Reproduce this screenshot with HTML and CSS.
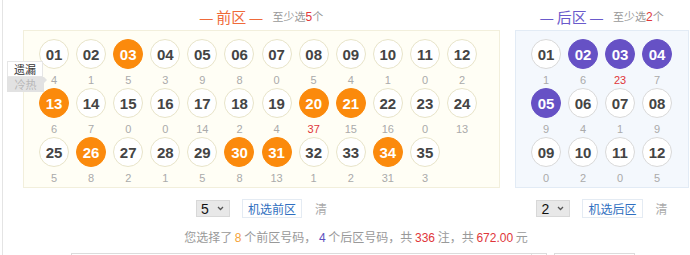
FILE: index.html
```html
<!DOCTYPE html>
<html lang="zh-CN">
<head>
    <meta charset="UTF-8">
    <meta name="viewport" content="width=device-width, initial-scale=1.0">
    <link rel="stylesheet" href="styles.css">
    <title>大乐透选号</title>
</head>
<body>
    <div class="page">
        <!-- 遗漏 / 冷热 -->
        <div class="tabs">
            <div class="tab">遗漏</div>
            <div class="tab off">冷热</div>
        </div>

        <div class="zones">
            <!-- 前区 -->
            <div class="zone zone-front">
                <div class="zone-head">
                    <span class="title"><span class="dash">—</span> 前区 <span class="dash">—</span></span>
                    <span class="tip">至少选<em>5</em>个</span>
                </div>
                <div class="board front">
                    <div class="cell"><div class="ball">01</div><div class="miss">4</div></div>
                    <div class="cell"><div class="ball">02</div><div class="miss">1</div></div>
                    <div class="cell"><div class="ball on">03</div><div class="miss">5</div></div>
                    <div class="cell"><div class="ball">04</div><div class="miss">3</div></div>
                    <div class="cell"><div class="ball">05</div><div class="miss">9</div></div>
                    <div class="cell"><div class="ball">06</div><div class="miss">8</div></div>
                    <div class="cell"><div class="ball">07</div><div class="miss">0</div></div>
                    <div class="cell"><div class="ball">08</div><div class="miss">5</div></div>
                    <div class="cell"><div class="ball">09</div><div class="miss">4</div></div>
                    <div class="cell"><div class="ball">10</div><div class="miss">1</div></div>
                    <div class="cell"><div class="ball">11</div><div class="miss">0</div></div>
                    <div class="cell"><div class="ball">12</div><div class="miss">2</div></div>

                    <div class="cell"><div class="ball on">13</div><div class="miss">6</div></div>
                    <div class="cell"><div class="ball">14</div><div class="miss">7</div></div>
                    <div class="cell"><div class="ball">15</div><div class="miss">0</div></div>
                    <div class="cell"><div class="ball">16</div><div class="miss">0</div></div>
                    <div class="cell"><div class="ball">17</div><div class="miss">14</div></div>
                    <div class="cell"><div class="ball">18</div><div class="miss">2</div></div>
                    <div class="cell"><div class="ball">19</div><div class="miss">4</div></div>
                    <div class="cell"><div class="ball on">20</div><div class="miss hot">37</div></div>
                    <div class="cell"><div class="ball on">21</div><div class="miss">15</div></div>
                    <div class="cell"><div class="ball">22</div><div class="miss">16</div></div>
                    <div class="cell"><div class="ball">23</div><div class="miss">0</div></div>
                    <div class="cell"><div class="ball">24</div><div class="miss">13</div></div>

                    <div class="cell"><div class="ball">25</div><div class="miss">5</div></div>
                    <div class="cell"><div class="ball on">26</div><div class="miss">8</div></div>
                    <div class="cell"><div class="ball">27</div><div class="miss">2</div></div>
                    <div class="cell"><div class="ball">28</div><div class="miss">1</div></div>
                    <div class="cell"><div class="ball">29</div><div class="miss">5</div></div>
                    <div class="cell"><div class="ball on">30</div><div class="miss">8</div></div>
                    <div class="cell"><div class="ball on">31</div><div class="miss">13</div></div>
                    <div class="cell"><div class="ball">32</div><div class="miss">1</div></div>
                    <div class="cell"><div class="ball">33</div><div class="miss">2</div></div>
                    <div class="cell"><div class="ball on">34</div><div class="miss">31</div></div>
                    <div class="cell"><div class="ball">35</div><div class="miss">3</div></div>
                </div>
                <div class="ctrl">
                    <div class="sel">5 <svg width="7" height="5" viewBox="0 0 7 5"><path d="M1 1l2.5 2.5L6 1" fill="none" stroke="#555" stroke-width="1.3"/></svg></div>
                    <button class="pick">机选前区</button>
                    <span class="clear">清</span>
                </div>
            </div>

            <!-- 后区 -->
            <div class="zone zone-back">
                <div class="zone-head">
                    <span class="title"><span class="dash">—</span> 后区 <span class="dash">—</span></span>
                    <span class="tip">至少选<em>2</em>个</span>
                </div>
                <div class="board back">
                    <div class="cell"><div class="ball">01</div><div class="miss">1</div></div>
                    <div class="cell"><div class="ball on">02</div><div class="miss">6</div></div>
                    <div class="cell"><div class="ball on">03</div><div class="miss hot">23</div></div>
                    <div class="cell"><div class="ball on">04</div><div class="miss">7</div></div>

                    <div class="cell"><div class="ball on">05</div><div class="miss">9</div></div>
                    <div class="cell"><div class="ball">06</div><div class="miss">4</div></div>
                    <div class="cell"><div class="ball">07</div><div class="miss">1</div></div>
                    <div class="cell"><div class="ball">08</div><div class="miss">9</div></div>

                    <div class="cell"><div class="ball">09</div><div class="miss">0</div></div>
                    <div class="cell"><div class="ball">10</div><div class="miss">2</div></div>
                    <div class="cell"><div class="ball">11</div><div class="miss">0</div></div>
                    <div class="cell"><div class="ball">12</div><div class="miss">5</div></div>
                </div>
                <div class="ctrl">
                    <div class="sel">2 <svg width="7" height="5" viewBox="0 0 7 5"><path d="M1 1l2.5 2.5L6 1" fill="none" stroke="#555" stroke-width="1.3"/></svg></div>
                    <button class="pick">机选后区</button>
                    <span class="clear">清</span>
                </div>
            </div>
        </div>

        <!-- 统计 -->
        <div class="sum">
            您选择了 <b class="c-front">8</b> 个前区号码， <b class="c-back">4</b> 个后区号码，共 <b class="c-red">336</b> 注，共 <b class="c-red">672.00</b> 元
        </div>

        <div class="bottom">
            <div class="box-input"><span class="box-side"></span></div>
            <div class="box-btn"></div>
        </div>
    </div>
</body>
</html>
```

FILE: styles.css
```css
:root {
    --orange: #fb8a0c;
    --purple: #6651c5;
    --red: #e0363a;
    --gray: #999;
}
body {
    margin: 0;
    background: #fff;
    font-family: "Noto Sans CJK SC", "Liberation Sans", sans-serif;
    overflow: hidden;
}
.page {
    position: relative;
    margin-left: 2px;
    height: 255px;
    border-left: 1px solid #e4e4e4;
}
.tabs {
    position: absolute;
    left: 4px;
    top: 61px;
    width: 36px;
}
.tab {
    height: 14px;
    line-height: 14px;
    font-size: 11px;
    text-align: center;
    color: #333;
    background: #fff;
    border: 1px solid #e6e6e6;
}
.tab.off {
    position: relative;
    height: 15px;
    line-height: 15px;
    border: none;
    background: #e2e2e2;
    color: #b8b8b8;
    width: 37px;
}
.tab.off::after {
    content: "";
    position: absolute;
    right: -3px;
    top: 0;
    border-left: 3px solid #e2e2e2;
    border-top: 3px solid transparent;
    border-bottom: 3px solid transparent;
}
.zones {
    display: flex;
    gap: 15px;
    padding-left: 20px;
}
.zone-front {
    width: 477px;
}
.zone-back {
    width: 174px;
}
.zone-head {
    height: 30px;
    display: flex;
    justify-content: center;
    align-items: center;
    gap: 10px;
    padding-top: 2px;
    box-sizing: border-box;
}
.title {
    font-size: 15px;
    color: #ef6a3a;
}
.zone-back .title {
    color: #6a5acb;
}
.dash {
    font-family: "Liberation Sans", sans-serif;
    font-size: 13px;
}
.tip {
    font-size: 11px;
    color: var(--gray);
}
.tip em {
    font-style: normal;
    color: var(--red);
    font-family: "Liberation Sans", sans-serif;
    font-size: 12px;
}
.board {
    display: grid;
    column-gap: 7.1px;
    padding: 8px 15px 1px;
    border: 1px solid #f2efdc;
    background: #fffef5;
    height: 158px;
    box-sizing: border-box;
    align-content: start;
}
.front {
    grid-template-columns: repeat(12, 30px);
}
.back {
    grid-template-columns: repeat(4, 30px);
    column-gap: 7px;
    background: #f4f8fd;
    border-color: #e2ebf5;
}
.ball {
    width: 30px;
    height: 30px;
    box-sizing: border-box;
    border-radius: 50%;
    border: 1px solid #e8e4c9;
    background: #fff;
    display: flex;
    align-items: center;
    justify-content: center;
    font: bold 15px "Liberation Sans", sans-serif;
    color: #444;
}
.back .ball {
    border-color: #d9d9d9;
}
.front .ball.on {
    background: var(--orange);
    border-color: var(--orange);
    color: #fff;
}
.back .ball.on {
    background: var(--purple);
    border-color: var(--purple);
    color: #fff;
}
.miss {
    height: 19px;
    box-sizing: border-box;
    padding-top: 3px;
    line-height: 16px;
    text-align: center;
    font: 11px/16px "Liberation Sans", sans-serif;
    color: #aaa;
}
.miss.hot {
    color: var(--red);
}
.ctrl {
    display: flex;
    justify-content: center;
    align-items: center;
    gap: 12px;
    margin-top: 11px;
    height: 19px;
}
.sel {
    width: 34px;
    height: 17px;
    box-sizing: border-box;
    padding: 0 5px 0 4px;
    display: flex;
    align-items: center;
    justify-content: space-between;
    background: #e8e8e8;
    border: 1px solid #d8d8d8;
    font: 14px "Liberation Sans", sans-serif;
    color: #111;
}
.pick {
    height: 19px;
    padding: 0 5px;
    margin: 0;
    background: #fff;
    border: 1px solid #e4ebf3;
    color: #2f6fc0;
    font-family: "Noto Sans CJK SC", sans-serif;
    font-size: 12px;
    line-height: 17px;
}
.clear {
    font-size: 12px;
    color: #aaa;
    margin-left: 1px;
}
.sum {
    margin-top: 11px;
    padding-left: 20px;
    width: 666px;
    text-align: center;
    font-size: 12px;
    line-height: 16px;
    color: var(--gray);
}
.sum b {
    font-weight: normal;
    font-family: "Liberation Sans", sans-serif;
}
.c-front {
    color: #f5a33a;
}
.c-back {
    color: #5b4fc0;
}
.c-red {
    color: var(--red);
}
.bottom {
    display: flex;
    gap: 7px;
    margin-top: 7px;
    padding-left: 68px;
}
.box-input {
    width: 476px;
    height: 30px;
    box-sizing: border-box;
    border: 1px solid #dcdcdc;
    display: flex;
    justify-content: flex-end;
}
.box-side {
    width: 14px;
    border-left: 1px solid #e2e2e2;
}
.box-btn {
    width: 81px;
    height: 30px;
    box-sizing: border-box;
    border: 1px solid #dcdcdc;
}
```
